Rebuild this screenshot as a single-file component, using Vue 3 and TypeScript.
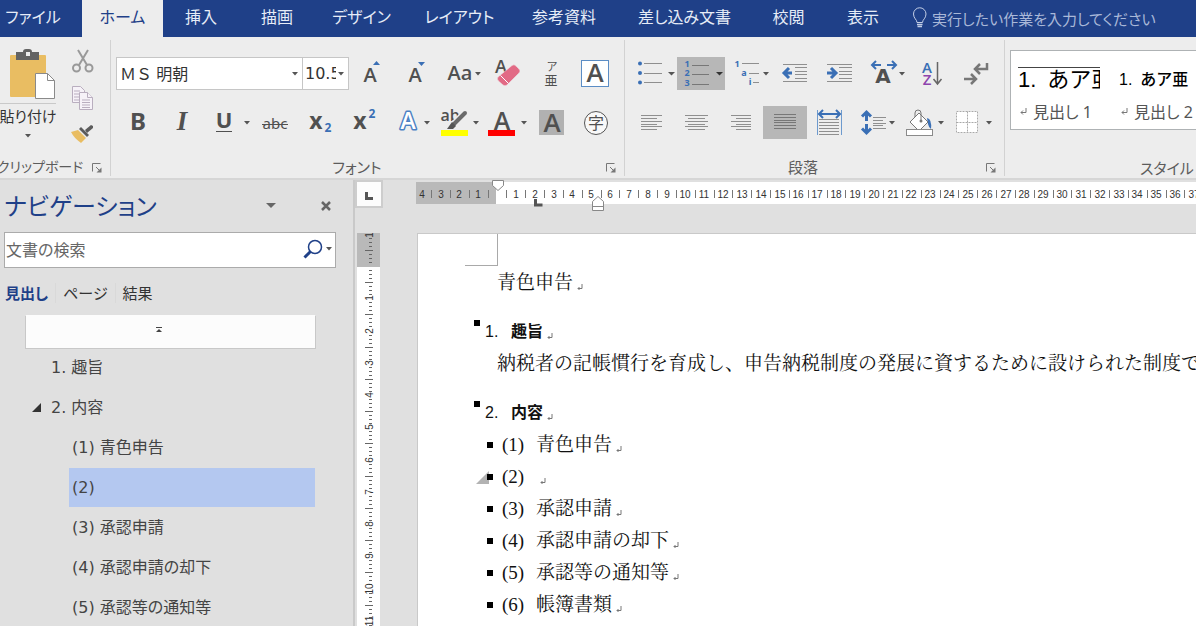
<script setup lang="ts">
import { ref } from 'vue'

const tabs: string[] = ['ファイル', 'ホーム', '挿入', '描画', 'デザイン', 'レイアウト', '参考資料', '差し込み文書', '校閲', '表示']
const activeTab = ref('ホーム')

const fontName = ref('ＭＳ 明朝')
const fontSize = ref('10.5')
const tellMe = ref('')
const query = ref('')

interface OutlineItem {
  text: string
  level: 1 | 2
  open?: boolean
}
const outline: OutlineItem[] = [
  { text: '1. 趣旨', level: 1 },
  { text: '2. 内容', level: 1, open: true },
  { text: '(1) 青色申告', level: 2 },
  { text: '(2)', level: 2 },
  { text: '(3) 承認申請', level: 2 },
  { text: '(4) 承認申請の却下', level: 2 },
  { text: '(5) 承認等の通知等', level: 2 },
]
const selected = ref('(2)')

interface Clause {
  no: string
  text: string
}
const clauses: Clause[] = [
  { no: '(1)', text: '青色申告' },
  { no: '(2)', text: '' },
  { no: '(3)', text: '承認申請' },
  { no: '(4)', text: '承認申請の却下' },
  { no: '(5)', text: '承認等の通知等' },
  { no: '(6)', text: '帳簿書類' },
]

/* Horizontal ruler: one character per division, zero at the left margin */
const hZero = 81
const hx = (n: number): number => Math.round(hZero + (n * 113) / 6)
const hNumbers = Array.from({ length: 42 }, (_, i) => i - 4).filter((n) => n !== 0)
const hTicks = Array.from({ length: 42 }, (_, i) => i - 4)
const hTick = (n: number): number => Math.round(hZero + ((n + 0.5) * 113) / 6)

/* Vertical ruler: one line per division, eight marks in each */
const vZero = 33
const vy = (n: number): number => Math.round(vZero + (n * 129) / 4)
const vNumbers = Array.from({ length: 11 }, (_, i) => i + 1)
const vMarks = Array.from({ length: 100 }, (_, i) => i - 7).filter((i) => i % 8 !== 0)
</script>

<template>
  <div class="app">
    <header class="tabbar">
      <button
        v-for="t in tabs"
        :key="t"
        type="button"
        class="tab"
        :class="{ active: t === activeTab }"
        @click="activeTab = t"
      >{{ t }}</button>
      <label class="tell">
        <svg class="bulb" width="16" height="22" viewBox="0 0 16 22" fill="none" stroke="#c3cee6" aria-hidden="true">
          <path d="M5 15.500c0-3-3.500-4-3.500-8.500a6 6 0 0 1 12.500 0c0 4.500-3.500 5.500-3.500 8.500z" />
          <path d="M5 17.500h5.500M5.500 19.500h4.500" stroke-width="1.500" />
        </svg>
        <input v-model="tellMe" type="text" aria-label="操作アシスト" placeholder="実行したい作業を入力してください" />
      </label>
    </header>

    <div class="ribbon">
      <section class="group clipboard" aria-label="クリップボード">
        <div class="clip-body">
          <button type="button" class="paste">
            <svg width="56" height="56" aria-hidden="true">
              <rect x="10" y="7" width="36" height="42" rx="1" fill="#e9bd62" />
              <path d="M16 4h7q0-3 3-3h3q3 0 3 3h7v8H16z" fill="#636363" />
              <rect x="26" y="4" width="4" height="4" fill="#ededed" />
              <path d="M35.500 25.500h12l7 7v18h-19z" fill="#fff" stroke="#8a8a8a" />
              <path d="M47.500 25.500v7h7" fill="none" stroke="#8a8a8a" />
              <path d="M0 55.500h56" stroke="#c9c9c9" />
            </svg>
            <span>貼り付け</span>
            <svg width="8" height="4" aria-hidden="true"><path d="M1 0h6L4 3.500z" fill="#555" /></svg>
          </button>
          <div class="clip-side">
            <button type="button" aria-label="切り取り">
              <svg width="24" height="26" fill="none" stroke="#999" stroke-width="2" aria-hidden="true">
                <path d="M7 2l9 15M17 2L8 17" />
                <circle cx="5.500" cy="20" r="3.500" /><circle cx="18" cy="20" r="3.500" />
              </svg>
            </button>
            <button type="button" aria-label="コピー">
              <svg width="24" height="26" fill="#f6f2f8" stroke="#b9aebf" aria-hidden="true">
                <path d="M1.500 1.500h8l4 4v12h-12z" />
                <path d="M3 6h6M3 9h6M3 12h6M3 15h6" />
                <path d="M8.500 7.500h8l5 5v12h-13z" />
                <path d="M16.500 7.500v5h5M11 15h8M11 17.500h8M11 20h8M11 22.500h8" />
              </svg>
            </button>
            <button type="button" aria-label="書式のコピー/貼り付け">
              <svg width="24" height="22" aria-hidden="true">
                <path d="M14 8l6-5 2 1v2l-6 5z" fill="#5c5c5c" />
                <path d="M10 5l8 8-2 2-8-8z" fill="#5c5c5c" />
                <path d="M7 8l8 8-5 5Q3 16 0 10z" fill="#e9bd62" />
              </svg>
            </button>
          </div>
        </div>
        <footer class="group-label">
          <span>クリップボード</span>
          <button type="button" class="launch" aria-label="クリップボードの詳細">
            <svg width="10" height="10" fill="none" stroke="#777"><path d="M.5 8.500v-8h8M4 4l4 4" /><path d="M9.500 4.500v5h-5z" fill="#777" stroke="none" /></svg>
          </button>
        </footer>
      </section>

      <section class="group font" aria-label="フォント">
        <div class="row">
          <span class="combo name">
            <select v-model="fontName" aria-label="フォント名">
              <option>ＭＳ 明朝</option>
              <option>游ゴシック</option>
            </select>
            <svg width="6" height="4" aria-hidden="true"><path d="M0 0h6L3 3.500z" fill="#555" /></svg>
          </span>
          <span class="combo size">
            <select v-model="fontSize" aria-label="フォント サイズ">
              <option>10.5</option>
              <option>12</option>
            </select>
            <svg width="6" height="4" aria-hidden="true"><path d="M0 0h6L3 3.500z" fill="#555" /></svg>
          </span>
          <button type="button" class="tool" aria-label="フォント サイズの拡大">
            <svg class="ico"><text class="semi" x="21" y="25" font-size="20">A</text><path class="blue" d="M24 8h7l-3.500-4z" /></svg>
          </button>
          <button type="button" class="tool" aria-label="フォント サイズの縮小">
            <svg class="ico"><text class="semi" x="22" y="25" font-size="20">A</text><path class="blue" d="M25 5h7l-3.500 4z" /></svg>
          </button>
          <button type="button" class="tool drop" aria-label="文字種の変換">
            <svg class="ico"><text class="semi" x="23" y="23" font-size="20">Aa</text><path class="dark" d="M38 15h6l-3 3.500z" /></svg>
          </button>
          <button type="button" class="tool" aria-label="書式のクリア">
            <svg class="ico">
              <text class="semi" x="16" y="16" font-size="18">A</text>
              <path d="M13 20L27 8.500q2-1.500 4 .5l3 3q2 2 0 4L22 28q-2 1.500-4 0l-4.500-4q-2-2-.5-4z" fill="#e26a85" stroke="#ededed" stroke-width=".5" />
              <path d="M15.500 18.500l8 8" stroke="#fff" />
            </svg>
          </button>
          <button type="button" class="tool" aria-label="ルビ">
            <svg class="ico"><text class="cjk" x="23" y="14" font-size="11">ア</text><text class="cjk" x="22" y="28" font-size="13">亜</text></svg>
          </button>
          <button type="button" class="tool" aria-label="囲み線">
            <svg class="ico"><rect x="8.500" y="3.500" width="27" height="26" fill="#fff" stroke="#5b8dc5" /><text class="semi" x="22" y="25" font-size="26">A</text></svg>
          </button>
        </div>
        <div class="row">
          <button type="button" class="tool" aria-label="太字">
            <svg class="ico"><text class="bold" x="22" y="24" font-size="24">B</text></svg>
          </button>
          <button type="button" class="tool" aria-label="斜体">
            <svg class="ico"><text class="ital" x="22" y="24" font-size="27">I</text></svg>
          </button>
          <button type="button" class="tool drop2" aria-label="下線">
            <svg class="ico"><text class="bold" x="20" y="22" font-size="22">U</text><path d="M12 25.500h16" stroke="#505050" /><path class="dark" d="M40 15h6l-3 3.500z" /></svg>
          </button>
          <button type="button" class="tool" aria-label="取り消し線">
            <svg class="ico"><text class="reg" x="21" y="23" font-size="15">abc</text><path d="M8 18.500h26" stroke="#505050" /></svg>
          </button>
          <button type="button" class="tool" aria-label="下付き">
            <svg class="ico"><text class="bold" x="18" y="23" font-size="23">x</text><text class="bold blue" x="30" y="26" font-size="12">2</text></svg>
          </button>
          <button type="button" class="tool" aria-label="上付き">
            <svg class="ico"><text class="bold" x="18" y="23" font-size="23">x</text><text class="bold blue" x="30" y="12" font-size="12">2</text></svg>
          </button>
          <button type="button" class="tool drop" aria-label="文字の効果">
            <svg class="ico">
              <text class="outline" x="22" y="23" font-size="23">A</text><path class="dark" d="M38 15h6l-3 3.500z" />
            </svg>
          </button>
          <button type="button" class="tool drop" aria-label="蛍光ペンの色">
            <svg class="ico">
              <rect x="7" y="24" width="27" height="6" fill="#ff0" />
              <text class="semi" x="16" y="15" font-size="16">ab</text>
              <path d="M30 8L20 18" stroke="#ededed" stroke-width="7" />
              <path d="M31 7L20 18" stroke="#6a6a6a" stroke-width="4" stroke-linecap="round" />
              <path d="M18 16l4 4-3 3h-6z" fill="#555" />
              <path class="dark" d="M39 15h6l-3 3.500z" />
            </svg>
          </button>
          <button type="button" class="tool drop" aria-label="フォントの色">
            <svg class="ico"><text class="semi" x="20" y="24" font-size="25">A</text><rect x="6" y="24" width="27" height="6" fill="red" /><path class="dark" d="M39 15h6l-3 3.500z" /></svg>
          </button>
          <button type="button" class="tool" aria-label="文字の網かけ">
            <svg class="ico"><rect x="9" y="4" width="25" height="25" fill="#b1b1b1" /><text class="semi" x="22" y="26" font-size="26">A</text></svg>
          </button>
          <button type="button" class="tool" aria-label="囲い文字">
            <svg class="ico"><circle cx="22" cy="17" r="11.500" fill="#f8f8f8" stroke="#555" /><text class="cjk" x="22" y="23" font-size="16">字</text></svg>
          </button>
        </div>
        <footer class="group-label">
          <span>フォント</span>
          <button type="button" class="launch" aria-label="フォントの詳細">
            <svg width="10" height="10" fill="none" stroke="#777"><path d="M.5 8.500v-8h8M4 4l4 4" /><path d="M9.500 4.500v5h-5z" fill="#777" stroke="none" /></svg>
          </button>
        </footer>
      </section>

      <section class="group para" aria-label="段落">
        <div class="row">
          <button type="button" class="tool drop" aria-label="箇条書き">
            <svg class="ico">
              <g class="blue"><circle cx="11" cy="6.500" r="2" /><circle cx="11" cy="16" r="2" /><circle cx="11" cy="25.500" r="2" /></g>
              <path class="line" d="M15 6.500h18M15 16.500h18M15 25.500h18" /><path class="dark" d="M39 15h7l-3.500 3.500z" />
            </svg>
          </button>
          <button type="button" class="tool drop on" aria-label="段落番号">
            <svg class="ico">
              <g class="num"><text x="10" y="10">1</text><text x="10" y="19">2</text><text x="10" y="29">3</text></g>
              <path class="line" d="M15 8.500h17M15 17.500h17M15 27.500h17" /><path d="M39 15h7l-3.500 3.500z" fill="#333" />
            </svg>
          </button>
          <button type="button" class="tool drop" aria-label="アウトライン">
            <svg class="ico">
              <g class="num"><text x="12" y="10">1</text><text x="19" y="19">a</text><text x="25" y="28">i</text></g>
              <path class="line" d="M17 6.500h17M24 16.500h10M28 25.500h6" /><path class="dark" d="M38 15h6l-3 3.500z" />
            </svg>
          </button>
          <button type="button" class="tool" aria-label="インデントを減らす">
            <svg class="ico">
              <path class="line" d="M10 7.500h24M22 10.500h12M22 14.500h12M22 17.500h12M22 21.500h12M10 24.500h24" />
              <path class="stroke" d="M19 16h-7M16 11l-5 5 5 5" />
            </svg>
          </button>
          <button type="button" class="tool" aria-label="インデントを増やす">
            <svg class="ico">
              <path class="line" d="M10 7.500h25M22 10.500h13M22 14.500h13M22 17.500h13M22 21.500h13M10 24.500h25" />
              <path class="stroke" d="M10 16h9M14 11l5 5-5 5" />
            </svg>
          </button>
          <button type="button" class="tool drop" aria-label="拡張書式">
            <svg class="ico">
              <path class="stroke mid" d="M20 8h-8M15 4l-4 4 4 4M26 8h8M31 4l4 4-4 4" />
              <text class="wide" x="22" y="26" font-size="20">A</text><path class="dark" d="M38 15h6l-3 3.500z" />
            </svg>
          </button>
          <button type="button" class="tool" aria-label="並べ替え">
            <svg class="ico">
              <text class="semi blue" x="18" y="16" font-size="15">A</text><text class="semi purple" x="18" y="28" font-size="15">Z</text>
              <path d="M28.500 5v21M24.500 22l4 5 4-5" fill="none" stroke="#666" stroke-width="1.500" />
            </svg>
          </button>
          <button type="button" class="tool" aria-label="編集記号の表示">
            <svg class="ico"><path d="M34 6v6H23M27 7l-5 5 5 5M11 22h11M18 17l5 5-5 5" fill="none" stroke="#777" stroke-width="2.500" /></svg>
          </button>
        </div>
        <div class="row second">
          <button type="button" class="tool" aria-label="左揃え">
            <svg class="ico"><path class="line" d="M10 9.500h21M10 12.500h16M10 15.500h21M10 18.500h16M10 20.500h21M10 23.500h16" /></svg>
          </button>
          <button type="button" class="tool" aria-label="中央揃え">
            <svg class="ico"><path class="line" d="M10 9.500h23M13 12.500h17M10 15.500h23M13 18.500h17M10 20.500h23M13 23.500h17" /></svg>
          </button>
          <button type="button" class="tool" aria-label="右揃え">
            <svg class="ico"><path class="line" d="M12 9.500h20M17 12.500h15M12 15.500h20M17 18.500h15M12 20.500h20M17 23.500h15" /></svg>
          </button>
          <button type="button" class="tool on" aria-label="両端揃え">
            <svg class="ico"><path class="line" d="M11 8.500h22M11 11.500h22M11 14.500h22M11 16.500h22M11 19.500h22M11 22.500h22" /></svg>
          </button>
          <button type="button" class="tool" aria-label="均等割り付け">
            <svg class="ico">
              <path d="M10.500 4v25M34.500 4v25" stroke="#6d9ace" />
              <path class="stroke mid" d="M13 8h19M16 4l-4 4 4 4M29 4l4 4-4 4" />
              <path class="line" d="M12 13.500h20M12 16.500h20M12 19.500h20M12 22.500h20M12 25.500h20M12 28.500h20" />
            </svg>
          </button>
          <button type="button" class="tool drop" aria-label="行と段落の間隔">
            <svg class="ico">
              <path class="stroke" d="M15.500 6v9M11 10.500l4.500-4.500 4.500 4.500M15.500 18v9M11 22.500l4.500 4.500 4.500-4.500" />
              <path class="line" d="M22 11.500h13M22 14.500h10M22 17.500h13M22 19.500h10M22 22.500h13" /><path class="dark" d="M38 15h6l-3 3.500z" />
            </svg>
          </button>
          <button type="button" class="tool drop" aria-label="塗りつぶし">
            <svg class="ico">
              <path d="M28 12q5 1 4 11-2-1-3-5z" fill="#3a6fb5" />
              <path d="M20 7l9 9-9 9-9-9z" fill="#fff" stroke="#777" />
              <path d="M16 11V7q0-3 3-3t3 3v8" fill="none" stroke="#777" /><circle cx="22" cy="15" r="1.500" fill="#777" />
              <rect x="7.500" y="23.500" width="26" height="6" fill="#fff" stroke="#8a8a8a" />
              <path class="dark" d="M39 15h6l-3 3.500z" />
            </svg>
          </button>
          <button type="button" class="tool drop" aria-label="罫線">
            <svg class="ico">
              <rect x="9" y="5" width="22" height="22" fill="#fff" />
              <path d="M9.500 5.500h21v21h-21zM20.500 5.500v21M9.500 16.500h21" fill="none" stroke="#a9a9a9" stroke-dasharray="2 1" />
              <path class="dark" d="M39 15h6l-3 3.500z" />
            </svg>
          </button>
        </div>
        <footer class="group-label">
          <span>段落</span>
          <button type="button" class="launch" aria-label="段落の詳細">
            <svg width="10" height="10" fill="none" stroke="#777"><path d="M.5 8.500v-8h8M4 4l4 4" /><path d="M9.500 4.500v5h-5z" fill="#777" stroke="none" /></svg>
          </button>
        </footer>
      </section>

      <section class="group styles" aria-label="スタイル">
        <div class="gallery">
          <button type="button" class="style-item">
            <span class="sample big">1.&ensp;あア亜</span>
            <span class="style-name"><svg class="ret" width="7" height="8"><path d="M6 0v4.500H1M3 2.500l-2 2 2 2" /></svg>見出し 1</span>
          </button>
          <button type="button" class="style-item">
            <span class="sample">1.&ensp;あア亜</span>
            <span class="style-name"><svg class="ret" width="7" height="8"><path d="M6 0v4.500H1M3 2.500l-2 2 2 2" /></svg>見出し 2</span>
          </button>
        </div>
        <footer class="group-label"><span>スタイル</span></footer>
      </section>
    </div>

    <div class="work">
      <aside class="nav">
        <div class="nav-head">
          <h1>ナビゲーション</h1>
          <button type="button" class="nav-menu" aria-label="作業ウィンドウのオプション"><svg width="10" height="6"><path d="M0 0h10L5 5z" fill="#666" /></svg></button>
          <button type="button" aria-label="閉じる"><svg width="10" height="10"><path d="M1 1l8 8M9 1L1 9" stroke="#666" stroke-width="2.500" /></svg></button>
        </div>
        <label class="search">
          <input v-model="query" type="text" aria-label="文書の検索" placeholder="文書の検索" />
          <svg width="30" height="22" aria-hidden="true">
            <circle cx="12" cy="8" r="6.500" fill="none" stroke="#1f4088" stroke-width="1.500" />
            <path d="M7.500 12.500L1.500 18.500" stroke="#1f4088" stroke-width="3" />
            <path d="M23 8h6l-3 3.500z" fill="#555" />
          </svg>
        </label>
        <div class="nav-tabs">
          <button type="button" class="current">見出し</button>
          <button type="button">ページ</button>
          <button type="button">結果</button>
        </div>
        <button type="button" class="jump" aria-label="先頭へ移動">
          <svg width="6" height="5"><path d="M0 .5h6" stroke="#444" /><path d="M0 5h6L3 2z" fill="#444" /></svg>
        </button>
        <ul class="outline">
          <li v-for="o in outline" :key="o.text" :class="['lv' + o.level, { sel: o.text === selected }]">
            <svg v-if="o.open" class="twist" width="9" height="9" aria-hidden="true"><path d="M9 0v9H0z" fill="#333" /></svg>
            <button type="button" @click="selected = o.text">{{ o.text }}</button>
          </li>
        </ul>
      </aside>

      <main class="doc">
        <div class="doc-top">
          <button type="button" class="corner" aria-label="タブの種類"><svg width="8" height="8"><path d="M1.500 0v6.500H8" fill="none" stroke="#555" stroke-width="3" /></svg></button>
          <svg class="hruler" aria-hidden="true">
            <rect y="2" width="100%" height="22" fill="#fff" />
            <rect y="2" width="80" height="22" fill="#b9b9b9" />
            <path v-for="n in hTicks" :key="'t' + n" :d="`M${hTick(n)}.500 10v8`" stroke="#777" />
            <text v-for="n in hNumbers" :key="n" :x="hx(n)" y="18">{{ Math.abs(n) }}</text>
            <path d="M76.500.5h11v5l-5.500 5-5.500-5z" fill="#fff" stroke="#888" />
            <path d="M119.500 19v6h7" fill="none" stroke="#555" stroke-width="3" />
            <path d="M176.500 30.500v-9l5.500-5 5.500 5v9zM176.500 26.500h11" fill="#fff" stroke="#888" />
          </svg>
        </div>
        <div class="doc-body">
          <svg class="vruler" aria-hidden="true">
            <rect width="23" height="100%" fill="#fff" />
            <rect width="23" height="34" fill="#b9b9b9" />
            <path
              v-for="i in vMarks"
              :key="i"
              :d="`M${i % 4 === 0 ? 8 : 12} ${vy(i / 8)}.500H${i % 4 === 0 ? 16 : 15}`"
              stroke="#666"
            />
            <text :transform="`translate(16 ${vy(-1) + 1}) rotate(-90)`">1</text>
            <text v-for="n in vNumbers" :key="'n' + n" :transform="`translate(16 ${vy(n)}) rotate(-90)`">{{ n }}</text>
          </svg>
          <article class="page">
            <div class="crop-mark"></div>
            <p class="title">青色申告<svg class="ret" width="6" height="8"><path d="M5 1v4.500H1M2.500 4l-1.500 1.500 1.500 1.500" /></svg></p>
            <h2><i class="sq"></i><span class="no">1.</span>趣旨<svg class="ret" width="6" height="8"><path d="M5 1v4.500H1M2.500 4l-1.500 1.500 1.500 1.500" /></svg></h2>
            <p class="text">納税者の記帳慣行を育成し、申告納税制度の発展に資するために設けられた制度で</p>
            <h2><i class="sq"></i><span class="no">2.</span>内容<svg class="ret" width="6" height="8"><path d="M5 1v4.500H1M2.500 4l-1.500 1.500 1.500 1.500" /></svg></h2>
            <h3 v-for="c in clauses" :key="c.no">
              <svg class="fold" width="13" height="13" aria-hidden="true"><path v-if="!c.text" d="M13 0v13H0z" fill="#b3b3b3" /></svg>
              <i class="sq"></i><span class="no">{{ c.no }}</span>{{ c.text }}<svg class="ret" width="6" height="8"><path d="M5 1v4.500H1M2.500 4l-1.500 1.500 1.500 1.500" /></svg>
            </h3>
          </article>
        </div>
      </main>
    </div>
  </div>
</template>

<style>
html,
body {
  margin: 0;
  overflow: hidden;
}
</style>

<style scoped>
.app {
  display: flex;
  flex-direction: column;
  height: 100vh;
  overflow: hidden;
  background: #e0e0e0;
  color: #444;
  font: 16px/20px "Noto Sans", "Noto Sans CJK JP", sans-serif;
  font-feature-settings: "palt";
}
.app *,
.app *::before {
  box-sizing: border-box;
}
button,
input,
select {
  margin: 0;
  padding: 0;
  border: 0;
  border-radius: 0;
  background: none;
  color: inherit;
  font: inherit;
  font-feature-settings: inherit;
  outline: 0;
}
svg {
  display: block;
  flex: none;
}

/* Tabs */
.tabbar {
  display: grid;
  grid-template-columns: 82px 81px 76px 76px 93px 103px 106px 135px 73px 76px 1fr;
  flex: none;
  height: 37px;
  background: #1f4088;
  color: #e6ecf7;
}
.tab {
  height: 37px;
  padding-bottom: 3px;
  white-space: nowrap;
}
.tab:first-child {
  padding-right: 16px;
}
.tab.active {
  background: #ededed;
  color: #1f4088;
}
.tell {
  display: flex;
  align-items: center;
  gap: 4px;
  padding-left: 11px;
  min-width: 0;
}
.bulb {
  margin-bottom: 2px;
}
.tell input {
  flex: 1;
  min-width: 0;
  font-size: 15px;
}
.tell input::placeholder {
  color: #a9b8d8;
  opacity: 1;
}

/* Ribbon */
.ribbon {
  display: flex;
  flex: none;
  height: 143px;
  background: #ededed;
  border-bottom: 2px solid #d6d6d6;
  overflow: hidden;
}
.group {
  position: relative;
  display: flex;
  flex-direction: column;
  flex: none;
  gap: 16px;
  padding-top: 20px;
}
.group:not(:last-child)::before {
  content: "";
  position: absolute;
  top: 3px;
  right: 0;
  width: 1px;
  height: 136px;
  background: #d2d2d2;
}
.group-label {
  display: flex;
  align-items: center;
  justify-content: center;
  height: 20px;
  margin-top: 2px;
  color: #5c5c5c;
  font-size: 15px;
  line-height: 20px;
}
.launch {
  position: absolute;
  right: 9px;
  bottom: 5px;
}
.clipboard {
  width: 111px;
  gap: 0;
  padding-top: 11px;
}
.clipboard .group-label {
  justify-content: flex-start;
  margin-top: 8px;
}
.clipboard .group-label span {
  margin-left: -3px;
  white-space: nowrap;
  font-size: 14px;
}
.clip-body {
  display: flex;
  height: 101px;
}
.paste {
  display: flex;
  flex-direction: column;
  align-items: center;
  gap: 8px;
  width: 56px;
  height: 96px;
}
.paste span {
  margin-top: -6px;
  color: #333;
  font-size: 15px;
  white-space: nowrap;
}
.clip-side {
  display: flex;
  flex-direction: column;
  gap: 11px;
  padding-left: 15px;
}
.row {
  display: flex;
  height: 33px;
}
.row.second {
  padding-left: 2px;
}
.font {
  width: 514px;
  padding-left: 5px;
}
.font .group-label {
  margin-right: 27px;
}
.para {
  width: 380px;
  padding-left: 4px;
}
.para .group-label {
  margin-right: 28px;
}
.combo {
  position: relative;
  display: block;
  height: 33px;
  border: 1px solid #c6c6c6;
  background: #fff;
}
.combo select {
  appearance: none;
  width: 100%;
  height: 31px;
  padding: 0 12px 0 3px;
  color: #333;
  overflow: hidden;
}
.combo svg {
  position: absolute;
  top: 14px;
  right: 4px;
}
.combo.name {
  width: 187px;
}
.combo.name select {
  font-feature-settings: normal;
}
.combo.size {
  width: 46px;
  border-left: 0;
}
.combo.size select {
  padding-left: 2px;
  font-family: "DejaVu Sans", sans-serif;
  text-overflow: clip;
}
.tool {
  width: 44px;
  height: 33px;
}
.tool.drop {
  width: 48px;
}
.tool.drop2 {
  width: 50px;
}
.tool.on {
  background: #b7b7b7;
}
.ico {
  width: 100%;
  height: 33px;
}
.ico text {
  fill: #505050;
  text-anchor: middle;
  font-family: "Noto Sans", sans-serif;
}
.ico .bold {
  font-weight: 700;
}
.ico .semi {
  font-family: "Open Sans", sans-serif;
  font-weight: 600;
}
.ico .wide {
  font-family: "DejaVu Sans", sans-serif;
  font-weight: 700;
}
.ico .ital {
  font-family: "Liberation Serif", serif;
  font-style: italic;
  font-weight: 700;
}
.ico .cjk {
  font-family: "Noto Sans CJK JP", sans-serif;
}
.ico .outline {
  font-family: "Open Sans", sans-serif;
  font-weight: 600;
  fill: #fff;
  stroke: #4a80c4;
  stroke-width: 3;
  stroke-linejoin: round;
  paint-order: stroke;
}
.ico .blue,
.ico .num text {
  fill: #3a6fb5;
}
.ico .num text {
  font-size: 9px;
  font-weight: 700;
}
.ico .purple {
  fill: #8e44ad;
}
.ico .dark {
  fill: #555;
}
.ico .line {
  stroke: #8f8f8f;
}
.tool.on .line {
  stroke: #777;
}
.ico .stroke {
  fill: none;
  stroke: #3a6fb5;
  stroke-width: 3;
}
.ico .mid {
  stroke-width: 2;
}

/* Style gallery */
.styles {
  flex: 1 0 191px;
  gap: 0;
  padding: 13px 0 0 5px;
}
.styles .group-label {
  justify-content: flex-start;
  margin: 28px 0 0 130px;
}
.gallery {
  display: flex;
  gap: 19px;
  height: 81px;
  padding: 16px 0 0 7px;
  border: 1px solid #aeb2b4;
  border-right: 0;
  background: #fff;
  overflow: hidden;
}
.style-item {
  display: flex;
  flex-direction: column;
  flex: none;
  width: 82px;
}
.sample {
  width: 82px;
  height: 26px;
  overflow: hidden;
  color: #000;
  font: 500 16px/26px "Liberation Sans", "Noto Sans CJK JP", sans-serif;
  text-align: left;
  white-space: nowrap;
}
.sample.big {
  border-top: 1px solid #444;
  font-size: 22px;
  font-weight: 400;
  line-height: 24px;
}
.style-name {
  display: flex;
  align-items: center;
  gap: 6px;
  width: 82px;
  margin-top: 9px;
  padding-left: 2px;
  color: #555;
  white-space: nowrap;
}
.ret path {
  fill: none;
  stroke: #777;
}

/* Navigation pane */
.work {
  display: flex;
  flex: 1;
  min-height: 0;
}
.nav {
  flex: none;
  width: 355px;
  border-right: 2px solid #c9c9c9;
  overflow: hidden;
}
.nav-head {
  display: flex;
  align-items: center;
  height: 52px;
  padding: 0 22px 0 4px;
}
.nav-head h1 {
  flex: 1;
  margin: 0;
  color: #1f4088;
  font-size: 24px;
  font-weight: 400;
  line-height: 52px;
}
.nav-menu {
  margin-right: 45px;
}
.search {
  display: flex;
  align-items: center;
  height: 36px;
  margin: 0 17px 0 4px;
  padding: 0 2px 0 1px;
  border: 1px solid #ababab;
  background: #fff;
}
.search input {
  flex: 1;
  min-width: 0;
}
.search input::placeholder {
  color: #666;
  opacity: 1;
}
.nav-tabs {
  display: flex;
  align-items: center;
  height: 47px;
  padding: 2px 0 0 5px;
}
.nav-tabs button {
  padding: 0 7px;
  border-right: 1px solid #d9d9d9;
  color: #333;
  font-size: 15px;
}
.nav-tabs button:last-child {
  border: 0;
}
.nav-tabs .current {
  padding-left: 0;
  color: #1f4088;
  font-weight: 700;
}
.jump {
  display: flex;
  justify-content: center;
  width: 291px;
  height: 34px;
  margin-left: 25px;
  padding: 11px 24px 0 0;
  border: 1px solid #c8c8c8;
  border-top-color: #fcfcfc;
  background: #fcfcfc;
}
.outline {
  display: flex;
  flex-direction: column;
  gap: 1px;
  margin: -1px 38px 0 0;
  padding: 0;
  list-style: none;
}
.outline li {
  position: relative;
  height: 39px;
  margin-left: 48px;
  font-family: "DejaVu Sans", "Noto Sans CJK JP", sans-serif;
}
.outline .lv2 {
  margin-left: 69px;
}
.outline button {
  width: 100%;
  height: 39px;
  padding-left: 3px;
  text-align: left;
}
.outline .sel {
  background: #b4c8f0;
}
.twist {
  position: absolute;
  left: -16px;
  top: 15px;
}

/* Document area */
.doc {
  display: flex;
  flex-direction: column;
  flex: 1;
  min-width: 0;
  min-height: 0;
}
.doc-top {
  display: flex;
  flex: none;
  gap: 33px;
  height: 53px;
}
.corner {
  display: flex;
  align-items: center;
  justify-content: center;
  width: 28px;
  height: 28px;
  padding-top: 4px;
  border: 2px solid #cdcdcd;
  background: #fcfcfc;
}
.hruler {
  flex: 1;
  min-width: 0;
  height: 32px;
  overflow: hidden;
}
.hruler text,
.vruler text {
  fill: #333;
  font: 10px "Liberation Sans", sans-serif;
  text-anchor: middle;
}
.doc-body {
  display: flex;
  flex: 1;
  min-height: 0;
  gap: 37px;
  padding-left: 2px;
}
.vruler {
  width: 23px;
  height: 100%;
  overflow: hidden;
}
.page {
  flex: 1;
  min-width: 0;
  border: 1px solid #c9c9c9;
  border-width: 1px 0 0 1px;
  background: #fff;
  color: #111;
  font: 19px/32px "Liberation Serif", "Noto Serif CJK JP", "Noto Sans CJK JP", serif;
  font-feature-settings: normal;
  white-space: nowrap;
  overflow: hidden;
}
.crop-mark {
  width: 33px;
  height: 32px;
  margin: 0 0 1px 47px;
  border: 1px solid #a9a9a9;
  border-width: 0 1px 1px 0;
}
.page p,
.page h2,
.page h3 {
  display: flex;
  align-items: center;
  margin: 0;
  font-size: 19px;
  font-weight: 400;
  line-height: 32px;
}
.page p {
  padding-left: 79px;
}
.page .ret {
  margin: 8px 0 0 4px;
}
.page h2 {
  margin-top: 17px;
  padding-left: 56px;
  font: 700 16px/32px "Liberation Sans", "Noto Sans CJK JP", sans-serif;
}
.page h2 .no {
  width: 26px;
  margin-left: 5px;
  font-weight: 400;
}
.page h2 .sq {
  margin-bottom: 18px;
}
.page h3 {
  padding-left: 58px;
}
.page h3 .no {
  width: 34px;
  margin-left: 9px;
}
.sq {
  flex: none;
  width: 6px;
  height: 6px;
  background: #000;
}
.fold {
  margin-right: -2px;
}
</style>
